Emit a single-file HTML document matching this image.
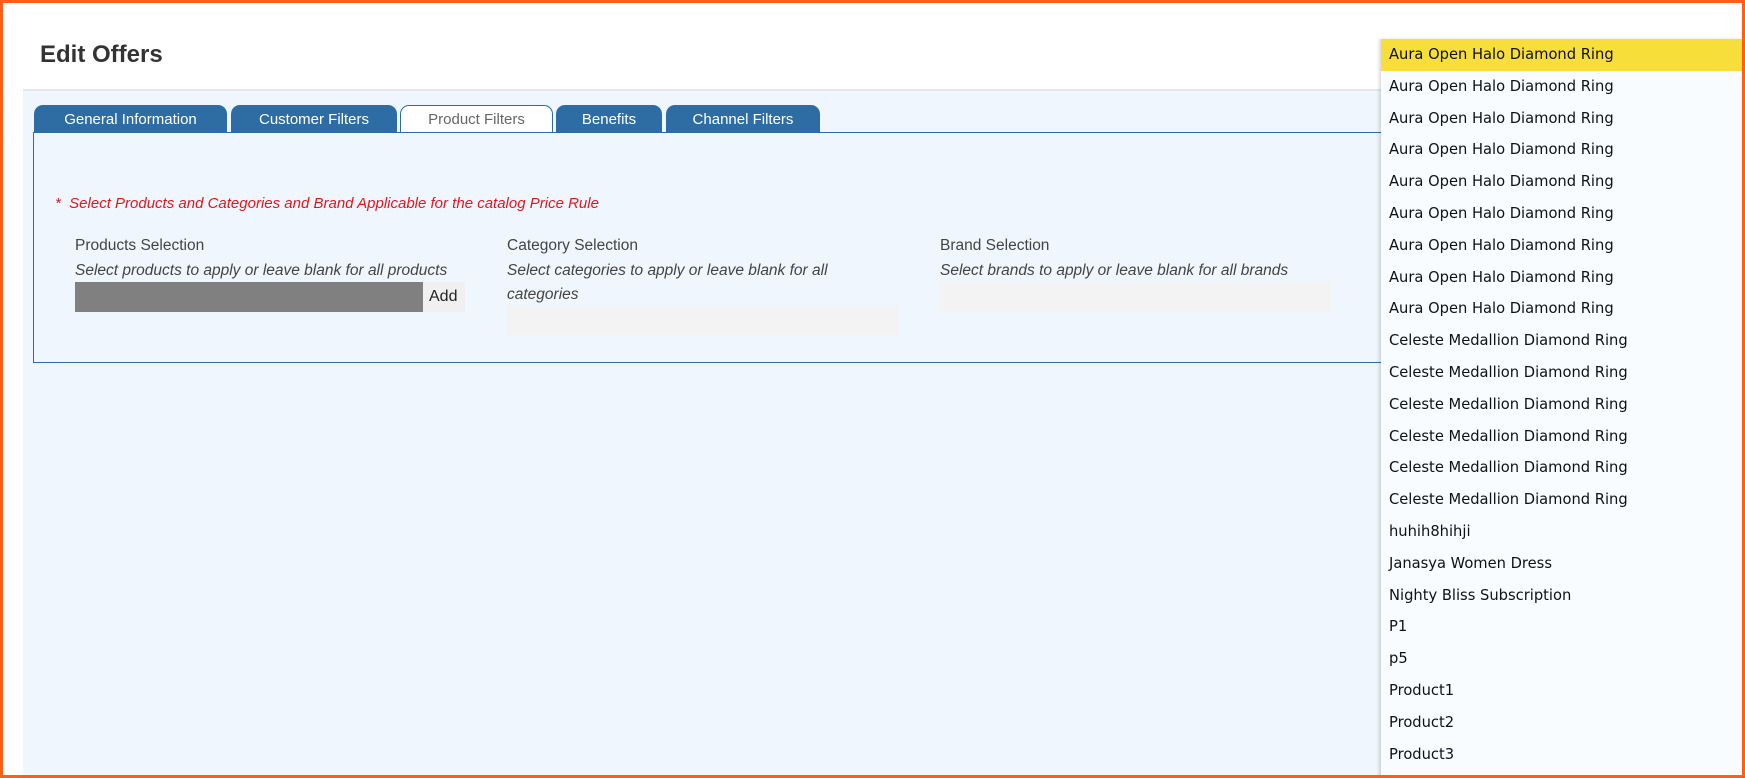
<!DOCTYPE html>
<html><head><meta charset="utf-8"><style>
*{margin:0;padding:0;box-sizing:border-box}
html,body{width:1745px;height:778px;overflow:hidden;background:#fff}
body{position:relative;font-family:"Liberation Sans",sans-serif;color:#333}
.frame{position:absolute;left:0;top:0;width:1745px;height:778px;border:3px solid #ff5f15;z-index:10;pointer-events:none}
h1{position:absolute;left:40px;top:41px;font-size:24px;font-weight:bold;color:#333}
.main{position:absolute;left:23px;top:89px;width:1720px;height:689px;background:#eff6fd;border-top:2px solid #e3e7eb}
.tab{position:absolute;top:105px;height:28px;background:#2e6da4;color:#fff;font-size:15px;line-height:30px;text-align:center;border-radius:9px 9px 0 0}
.tab.act{background:#fff;color:#666;border:1px solid #2e6da4;border-bottom:none;line-height:28px}
.panel{position:absolute;left:33px;top:132px;width:1360px;height:231px;border:1px solid #2e6da4;border-right:none}
.red{position:absolute;left:55px;top:195px;font-size:15px;font-style:italic;color:#e8141c}
.lbl{position:absolute;font-size:15.5px;color:#444}
.desc{position:absolute;font-size:15.5px;font-style:italic;color:#444;line-height:24px}
.box{position:absolute;background:#f3f3f3}
.dd{position:absolute;left:1381px;top:39px;width:362px;height:739px;background:#f8fcff;box-shadow:-2px 0 3px rgba(0,0,0,.15);font-family:"DejaVu Sans",sans-serif;font-size:14.7px;color:#111}
.dd div{height:31.8px;line-height:32px;padding-left:8px}
.dd .hl{background:#f7de3b}
</style></head><body>
<h1>Edit Offers</h1>
<div class="main"></div>
<div class="tab" style="left:34px;width:193px">General Information</div>
<div class="tab" style="left:231px;width:166px">Customer Filters</div>
<div class="tab act" style="left:400px;width:153px">Product Filters</div>
<div class="tab" style="left:556px;width:106px">Benefits</div>
<div class="tab" style="left:666px;width:154px">Channel Filters</div>
<div class="panel"></div>
<div class="red">*&nbsp; Select Products and Categories and Brand Applicable for the catalog Price Rule</div>
<div class="lbl" style="left:75px;top:237px">Products Selection</div>
<div class="desc" style="left:75px;top:259px">Select products to apply or leave blank for all products</div>
<div class="box" style="left:75px;top:282px;width:348px;height:30px;background:#808080"></div>
<div class="box" style="left:423px;top:282px;width:42px;height:30px;background:#f0f0f0;font-size:16px;line-height:30px;padding-left:6px;color:#222">Add</div>
<div class="lbl" style="left:507px;top:237px">Category Selection</div>
<div class="desc" style="left:507px;top:259px;width:390px">Select categories to apply or leave blank for all categories</div>
<div class="box" style="left:507px;top:305px;width:391px;height:30px"></div>
<div class="lbl" style="left:940px;top:237px">Brand Selection</div>
<div class="desc" style="left:940px;top:259px">Select brands to apply or leave blank for all brands</div>
<div class="box" style="left:940px;top:281px;width:391px;height:31px"></div>
<div class="dd">
<div class="hl">Aura Open Halo Diamond Ring</div>
<div>Aura Open Halo Diamond Ring</div>
<div>Aura Open Halo Diamond Ring</div>
<div>Aura Open Halo Diamond Ring</div>
<div>Aura Open Halo Diamond Ring</div>
<div>Aura Open Halo Diamond Ring</div>
<div>Aura Open Halo Diamond Ring</div>
<div>Aura Open Halo Diamond Ring</div>
<div>Aura Open Halo Diamond Ring</div>
<div>Celeste Medallion Diamond Ring</div>
<div>Celeste Medallion Diamond Ring</div>
<div>Celeste Medallion Diamond Ring</div>
<div>Celeste Medallion Diamond Ring</div>
<div>Celeste Medallion Diamond Ring</div>
<div>Celeste Medallion Diamond Ring</div>
<div>huhih8hihji</div>
<div>Janasya Women Dress</div>
<div>Nighty Bliss Subscription</div>
<div>P1</div>
<div>p5</div>
<div>Product1</div>
<div>Product2</div>
<div>Product3</div>
</div>
<div class="frame"></div>
</body></html>
